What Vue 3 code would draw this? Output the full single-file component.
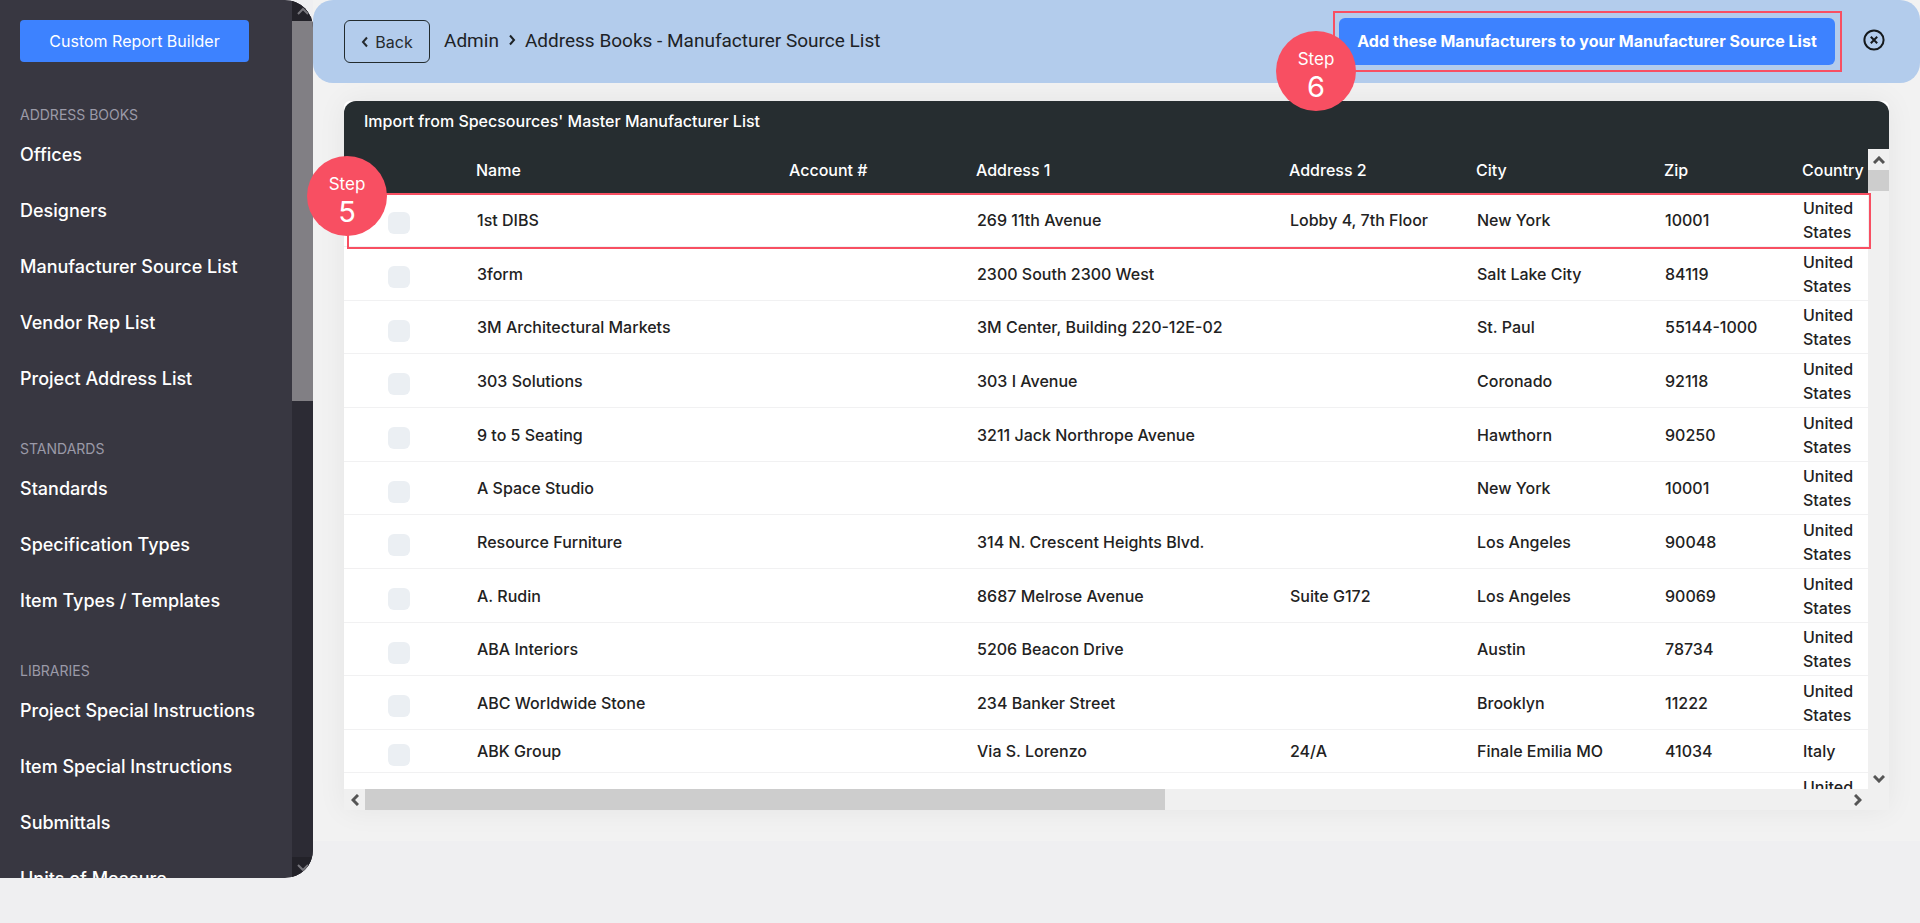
<script setup>
const sections = [
  { title: 'ADDRESS BOOKS', items: ['Offices', 'Designers', 'Manufacturer Source List', 'Vendor Rep List', 'Project Address List'] },
  { title: 'STANDARDS', items: ['Standards', 'Specification Types', 'Item Types / Templates'] },
  { title: 'LIBRARIES', items: ['Project Special Instructions', 'Item Special Instructions', 'Submittals', 'Units of Measure'] },
]

const columns = ['Name', 'Account #', 'Address 1', 'Address 2', 'City', 'Zip', 'Country']

const rows = [
  ['1st DIBS', '', '269 11th Avenue', 'Lobby 4, 7th Floor', 'New York', '10001', 'United States'],
  ['3form', '', '2300 South 2300 West', '', 'Salt Lake City', '84119', 'United States'],
  ['3M Architectural Markets', '', '3M Center, Building 220-12E-02', '', 'St. Paul', '55144-1000', 'United States'],
  ['303 Solutions', '', '303 I Avenue', '', 'Coronado', '92118', 'United States'],
  ['9 to 5 Seating', '', '3211 Jack Northrope Avenue', '', 'Hawthorn', '90250', 'United States'],
  ['A Space Studio', '', '', '', 'New York', '10001', 'United States'],
  ['Resource Furniture', '', '314 N. Crescent Heights Blvd.', '', 'Los Angeles', '90048', 'United States'],
  ['A. Rudin', '', '8687 Melrose Avenue', 'Suite G172', 'Los Angeles', '90069', 'United States'],
  ['ABA Interiors', '', '5206 Beacon Drive', '', 'Austin', '78734', 'United States'],
  ['ABC Worldwide Stone', '', '234 Banker Street', '', 'Brooklyn', '11222', 'United States'],
  ['ABK Group', '', 'Via S. Lorenzo', '24/A', 'Finale Emilia MO', '41034', 'Italy'],
  ['', '', '', '', '', '', 'United States'],
]
</script>

<template>
  <div class="app">
    <aside class="sidebar">
      <div class="sidebar-content">
        <button class="report-btn" type="button">Custom Report Builder</button>
        <nav>
          <section v-for="s in sections" :key="s.title" class="nav-section">
            <h2>{{ s.title }}</h2>
            <a v-for="item in s.items" :key="item" href="#">{{ item }}</a>
          </section>
        </nav>
      </div>
      <div class="side-scroll" aria-hidden="true">
        <span class="side-arrow"><svg width="12" height="8" viewBox="0 0 12 8"><path d="M1 7 6 2 11 7" /></svg></span>
        <span class="side-thumb"></span>
        <span class="side-track"></span>
        <span class="side-arrow"><svg width="12" height="8" viewBox="0 0 12 8"><path d="M1 1 6 6 11 1" /></svg></span>
      </div>
    </aside>

    <main class="main">
      <header class="topbar">
        <button class="back-btn" type="button">
          <svg width="8" height="12" viewBox="0 0 8 12"><path d="M6 1.5 2 6 6 10.5" /></svg>
          Back
        </button>
        <div class="crumbs">
          <a href="#">Admin</a>
          <svg width="8" height="12" viewBox="0 0 8 12"><path d="M2 1.5 6 6 2 10.5" /></svg>
          <h1>Address Books - Manufacturer Source List</h1>
        </div>
        <div class="action">
          <button class="add-btn" type="button">Add these Manufacturers to your Manufacturer Source List</button>
          <div class="step step-six"><span>Step</span><b>6</b></div>
        </div>
        <button class="close-btn" type="button" aria-label="Close">
          <svg width="22" height="22" viewBox="0 0 22 22">
            <circle cx="11" cy="11" r="9.6" />
            <path d="M7.8 7.8 14.2 14.2M14.2 7.8 7.8 14.2" />
          </svg>
        </button>
      </header>

      <div class="card">
        <h2 class="card-title">Import from Specsources' Master Manufacturer List</h2>
        <div class="scroller">
          <div class="viewport">
            <table>
              <colgroup>
                <col class="c-check" /><col class="c-wide" /><col class="c-mid" /><col class="c-wide" />
                <col class="c-mid" /><col class="c-city" /><col class="c-zip" /><col class="c-country" />
              </colgroup>
              <thead>
                <tr>
                  <th aria-label="Select"></th>
                  <th v-for="c in columns" :key="c">{{ c }}</th>
                </tr>
              </thead>
              <tbody>
                <tr v-for="(r, i) in rows" :key="i">
                  <td class="check"><input type="checkbox" :aria-label="'Select ' + (r[0] || 'manufacturer')" /></td>
                  <td v-for="(v, j) in r" :key="j">{{ v }}</td>
                </tr>
              </tbody>
            </table>
          </div>
          <div class="vbar" aria-hidden="true">
            <span class="arrow"><svg width="12" height="8" viewBox="0 0 12 8"><path d="M1 7 6 2 11 7" /></svg></span>
            <span class="vthumb"></span>
            <span class="fill"></span>
            <span class="arrow"><svg width="12" height="8" viewBox="0 0 12 8"><path d="M1 1 6 6 11 1" /></svg></span>
          </div>
          <div class="hbar" aria-hidden="true">
            <span class="arrow"><svg width="8" height="12" viewBox="0 0 8 12"><path d="M7 1 2 6 7 11" /></svg></span>
            <span class="htrack"><span class="hthumb"></span></span>
            <span class="arrow"><svg width="8" height="12" viewBox="0 0 8 12"><path d="M1 1 6 6 1 11" /></svg></span>
          </div>
          <div class="corner"></div>
        </div>
        <div class="row-mark">
          <div class="step step-five"><span>Step</span><b>5</b></div>
        </div>
      </div>
    </main>
  </div>
</template>

<style>
body {
  background: #efeff1;
}
</style>

<style scoped>
.app {
  display: flex;
  align-items: flex-start;
  min-height: 100vh;
  font-family: Inter, "Liberation Sans", sans-serif;
  font-size: 16px;
  color: #222;
}
button {
  font: inherit;
  cursor: pointer;
}
a {
  color: inherit;
  text-decoration: none;
}
h1,
h2 {
  margin: 0;
  font-weight: 400;
}
svg {
  display: block;
  fill: none;
  stroke: currentColor;
  stroke-width: 2;
}

/* Sidebar */
.sidebar {
  display: flex;
  flex: 0 0 313px;
  height: calc(100vh - 45px);
  overflow: hidden;
  border-radius: 0 28px 28px 0;
  background: #383741;
}
.sidebar-content {
  flex: 1;
  overflow: hidden;
  padding: 20px 20px 0;
}
.report-btn {
  display: block;
  width: 229px;
  height: 42px;
  margin-bottom: 41px;
  padding: 0;
  border: 0;
  border-radius: 4px;
  background: #3d82ff;
  color: #fff;
}
.nav-section {
  margin-bottom: 30px;
}
.nav-section h2 {
  font-size: 14px;
  line-height: 24px;
  color: #9b9aa8;
}
.nav-section a {
  display: block;
  line-height: 56px;
  font-size: 18px;
  font-weight: 500;
  color: #fff;
  white-space: nowrap;
}
.side-scroll {
  display: flex;
  flex-direction: column;
  width: 21px;
  background: #2c2b34;
  color: #77767c;
}
.side-arrow {
  display: flex;
  align-items: center;
  justify-content: center;
  height: 21px;
  background: #232229;
}
.side-thumb {
  flex: 380;
  background: #817f84;
}
.side-track {
  flex: 456;
}

/* Main column */
.main {
  flex: 1;
  min-width: 0;
  padding-bottom: 31px;
  background: #f2f2f2;
}
.topbar {
  position: relative;
  z-index: 2;
  display: flex;
  align-items: center;
  height: 83px;
  padding: 0 35px 3px 31px;
  box-sizing: border-box;
  border-radius: 20px;
  background: #b3ccec;
}
.back-btn {
  display: flex;
  align-items: center;
  justify-content: center;
  gap: 6px;
  width: 86px;
  height: 43px;
  margin-top: 3px;
  padding: 0;
  border: 1px solid #222b2e;
  border-radius: 6px;
  background: transparent;
  color: #262b2f;
}
.crumbs {
  display: flex;
  flex: 1;
  align-items: center;
  gap: 9px;
  margin-left: 14px;
  font-family: Roboto, "Liberation Sans", sans-serif;
  font-size: 19px;
  color: #1d2226;
  white-space: nowrap;
}
.crumbs h1 {
  font-size: 19px;
}
.action {
  position: relative;
  margin-top: 2px;
  padding: 5px 5px 5px 4px;
  border: 2px solid #f84f62;
}
.add-btn {
  display: block;
  width: 496px;
  height: 47px;
  padding: 0;
  border: 0;
  border-radius: 6px;
  background: #3d82ff;
  color: #fff;
  font-weight: 700;
  white-space: nowrap;
}
.close-btn {
  margin-left: 21px;
  padding: 0;
  border: 0;
  background: transparent;
  color: #15191c;
}

/* Tutorial badges */
.step {
  position: absolute;
  display: flex;
  flex-direction: column;
  align-items: center;
  width: 80px;
  height: 80px;
  box-sizing: border-box;
  padding-top: 17px;
  border-radius: 50%;
  background: #f84f62;
  color: #fff;
  font-size: 17px;
  line-height: 22px;
}
.step b {
  font-size: 29px;
  line-height: 34px;
  font-weight: 400;
}
.step-six {
  top: 18px;
  left: -59px;
}
.step-five {
  top: -39px;
  left: -42px;
}

/* Manufacturer table */
.card {
  position: relative;
  margin: 18px 31px 0;
  border-radius: 6px 6px 0 0;
  background: #fff;
  box-shadow: 0 0 30px rgba(0, 0, 0, 0.06);
}
.card-title {
  height: 48px;
  padding: 8px 20px;
  box-sizing: border-box;
  border-radius: 12px 12px 0 0;
  background: #262d30;
  color: #fff;
  font-size: 16px;
  line-height: 24px;
  font-weight: 500;
}
.scroller {
  display: grid;
  grid-template-columns: 1fr 21px;
  grid-template-rows: calc(100vh - 283px) 21px;
}
.viewport {
  overflow: hidden;
}
table {
  width: 100%;
  table-layout: fixed;
  border-collapse: separate;
  border-spacing: 0;
}
.c-check { width: 116px; }
.c-wide { width: 313px; }
.c-mid { width: 187px; }
.c-city { width: 188px; }
.c-zip { width: 138px; }
.c-country { width: 82px; }
th {
  height: 44px;
  padding: 0 0 2px 16px;
  box-sizing: border-box;
  background: #262d30;
  color: #fff;
  font-weight: 500;
  text-align: left;
  white-space: nowrap;
}
td {
  padding: 3px 0 2px 17px;
  border-bottom: 1px solid #f1f1f2;
  font-weight: 450;
  line-height: 24px;
}
tr:nth-child(3n) td {
  padding-top: 2px;
}
tr:nth-child(11) td {
  padding: 9px 0 9px 17px;
}
td.check,
tr:nth-child(n) td.check {
  padding: 7px 0 0 44px;
}
.check input {
  appearance: none;
  display: block;
  width: 22px;
  height: 22px;
  margin: 0;
  border-radius: 6px;
  background: #ebeff3;
}

/* Scroll bars */
.vbar {
  display: flex;
  flex-direction: column;
  background: #f0f0f0;
}
.hbar {
  display: flex;
  background: #f0f0f0;
}
.corner {
  background: #f0f0f0;
}
.arrow {
  display: flex;
  align-items: center;
  justify-content: center;
  width: 21px;
  height: 21px;
  color: #555;
}
.arrow path {
  stroke-width: 3;
}
.vthumb {
  height: 21px;
  background: #cdcdcd;
}
.fill {
  flex: 1;
}
.htrack {
  flex: 1;
}
.hthumb {
  display: block;
  width: 54%;
  height: 100%;
  background: #cdcdcd;
}
.row-mark {
  position: absolute;
  top: 92px;
  left: 3px;
  right: 18px;
  height: 56px;
  box-sizing: border-box;
  border: 2px solid #f84f62;
}
</style>
